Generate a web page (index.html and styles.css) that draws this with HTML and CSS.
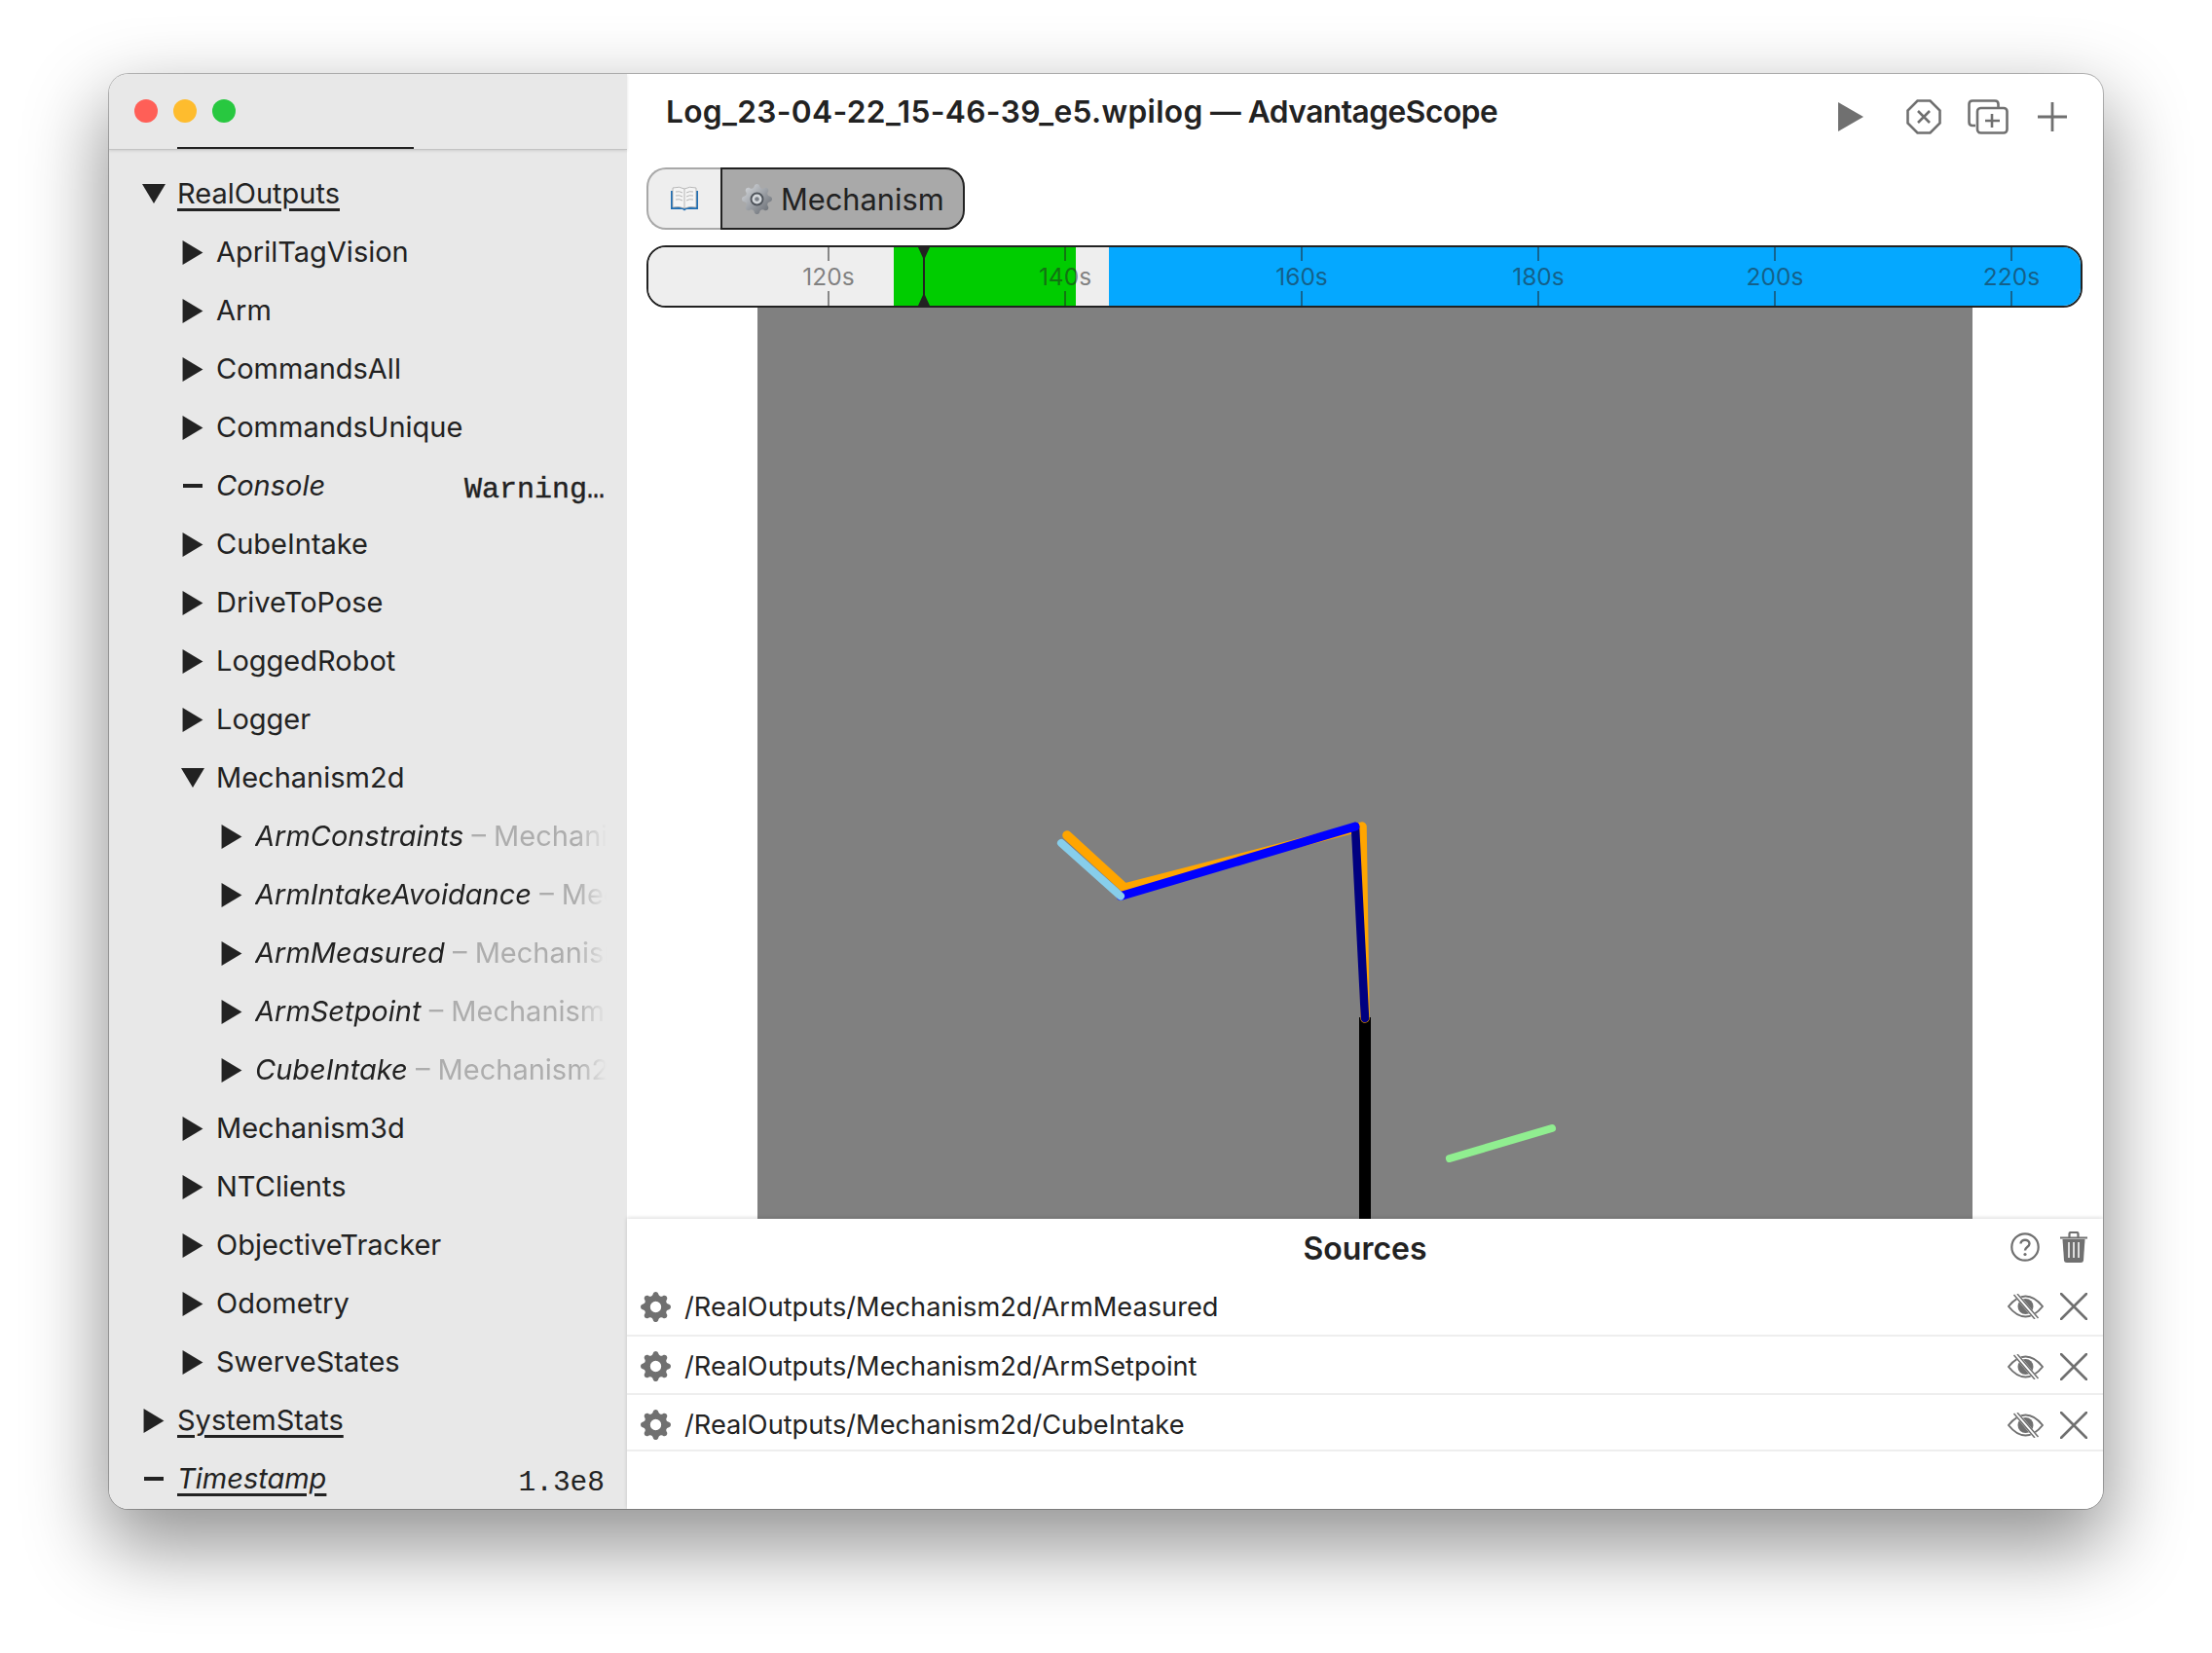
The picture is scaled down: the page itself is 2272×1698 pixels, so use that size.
FILE: index.html
```html
<!DOCTYPE html>
<html lang="en">
<head>
    <meta charset="UTF-8">
    <title>Log_23-04-22_15-46-39_e5.wpilog — AdvantageScope</title>
    <link rel="stylesheet" href="styles.css">
</head>
<body>
    <svg class="sprite" width="0" height="0">
        <symbol id="arrowRight" viewBox="0 0 20 24"><path d="M0 0L20 12L0 24Z"/></symbol>
        <symbol id="arrowDown" viewBox="0 0 24 20"><path d="M0 0H24L12 20Z"/></symbol>
        <symbol id="gear" viewBox="0 0 16 16"><path fill-rule="evenodd" d="M9.405 1.05c-.413-1.4-2.397-1.4-2.81 0l-.1.34a1.464 1.464 0 0 1-2.105.872l-.31-.17c-1.283-.698-2.686.705-1.987 1.987l.169.311c.446.82.023 1.841-.872 2.105l-.34.1c-1.4.413-1.4 2.397 0 2.81l.34.1a1.464 1.464 0 0 1 .872 2.105l-.17.31c-.698 1.283.705 2.686 1.987 1.987l.311-.169a1.464 1.464 0 0 1 2.105.872l.1.34c.413 1.4 2.397 1.4 2.81 0l.1-.34a1.464 1.464 0 0 1 2.105-.872l.31.17c1.283.698 2.686-.705 1.987-1.987l-.169-.311a1.464 1.464 0 0 1 .872-2.105l.34-.1c1.4-.413 1.4-2.397 0-2.81l-.34-.1a1.464 1.464 0 0 1-.872-2.105l.17-.31c.698-1.283-.705-2.686-1.987-1.987l-.311.169a1.464 1.464 0 0 1-2.105-.872l-.1-.34zM8 10.93a2.929 2.929 0 1 1 0-5.86 2.929 2.929 0 0 1 0 5.858z"/></symbol>
        <symbol id="eyeOff" viewBox="0 0 37 26">
            <path d="M1 13C7 5.500 13 2.500 18.500 2.500S30 5.500 36 13C30 20.500 24 23.500 18.500 23.500S7 20.500 1 13Z" fill="none" stroke="#707070" stroke-width="2"/>
            <circle cx="18.500" cy="13" r="8" fill="#707070"/>
            <path d="M8 0L30 26" stroke="#fff" stroke-width="5"/>
            <path d="M6.500 1L28 26M10 0L31.500 25" stroke="#707070" stroke-width="1.500"/>
        </symbol>
        <symbol id="close" viewBox="0 0 28 28"><path d="M1 1L27 27M27 1L1 27" fill="none" stroke="#707070" stroke-width="2.600" stroke-linecap="round"/></symbol>
    </svg>

    <div class="window">
        <aside class="sidebar">
            <div class="titlebar">
                <div class="lights">
                    <span class="light light-red"></span>
                    <span class="light light-yellow"></span>
                    <span class="light light-green"></span>
                </div>
                <div class="scroll-line"></div>
            </div>
            <div class="fields">
                <div class="row"><svg class="arrow arrow-down"><use href="#arrowDown"/></svg><span class="key table">RealOutputs</span></div>
                <div class="row lvl1"><svg class="arrow"><use href="#arrowRight"/></svg><span class="key">AprilTagVision</span></div>
                <div class="row lvl1"><svg class="arrow"><use href="#arrowRight"/></svg><span class="key">Arm</span></div>
                <div class="row lvl1"><svg class="arrow"><use href="#arrowRight"/></svg><span class="key">CommandsAll</span></div>
                <div class="row lvl1"><svg class="arrow"><use href="#arrowRight"/></svg><span class="key">CommandsUnique</span></div>
                <div class="row lvl1"><span class="dash"></span><span class="key leaf">Console</span><span class="value value-text">Warning…</span></div>
                <div class="row lvl1"><svg class="arrow"><use href="#arrowRight"/></svg><span class="key">CubeIntake</span></div>
                <div class="row lvl1"><svg class="arrow"><use href="#arrowRight"/></svg><span class="key">DriveToPose</span></div>
                <div class="row lvl1"><svg class="arrow"><use href="#arrowRight"/></svg><span class="key">LoggedRobot</span></div>
                <div class="row lvl1"><svg class="arrow"><use href="#arrowRight"/></svg><span class="key">Logger</span></div>
                <div class="row lvl1"><svg class="arrow arrow-down"><use href="#arrowDown"/></svg><span class="key">Mechanism2d</span></div>
                <div class="row lvl2"><svg class="arrow"><use href="#arrowRight"/></svg><span class="faded"><span class="leaf">ArmConstraints</span> <span class="type">– Mechanism2d</span></span></div>
                <div class="row lvl2"><svg class="arrow"><use href="#arrowRight"/></svg><span class="faded"><span class="leaf">ArmIntakeAvoidance</span> <span class="type">– Mechanism2d</span></span></div>
                <div class="row lvl2"><svg class="arrow"><use href="#arrowRight"/></svg><span class="faded"><span class="leaf">ArmMeasured</span> <span class="type">– Mechanism2d</span></span></div>
                <div class="row lvl2"><svg class="arrow"><use href="#arrowRight"/></svg><span class="faded"><span class="leaf">ArmSetpoint</span> <span class="type">– Mechanism2d</span></span></div>
                <div class="row lvl2"><svg class="arrow"><use href="#arrowRight"/></svg><span class="faded"><span class="leaf">CubeIntake</span> <span class="type">– Mechanism2d</span></span></div>
                <div class="row lvl1"><svg class="arrow"><use href="#arrowRight"/></svg><span class="key">Mechanism3d</span></div>
                <div class="row lvl1"><svg class="arrow"><use href="#arrowRight"/></svg><span class="key">NTClients</span></div>
                <div class="row lvl1"><svg class="arrow"><use href="#arrowRight"/></svg><span class="key">ObjectiveTracker</span></div>
                <div class="row lvl1"><svg class="arrow"><use href="#arrowRight"/></svg><span class="key">Odometry</span></div>
                <div class="row lvl1"><svg class="arrow"><use href="#arrowRight"/></svg><span class="key">SwerveStates</span></div>
                <div class="row"><svg class="arrow"><use href="#arrowRight"/></svg><span class="key table">SystemStats</span></div>
                <div class="row"><span class="dash"></span><span class="key leaf table">Timestamp</span><span class="value">1.3e8</span></div>
            </div>
        </aside>

        <main class="main">
            <header class="header">
                <div class="title"><span class="title-file">Log_23-04-22_15-46-39_e5.wpilog</span><span class="title-app"> — AdvantageScope</span></div>
                <div class="header-icons">
                    <svg class="icon-play" viewBox="0 0 26 30"><path d="M0 0L26 15L0 30Z"/></svg>
                    <svg class="icon-stop" viewBox="0 0 36 36"><path d="M11.500 1.500H24.500L34.500 11.500V24.500L24.500 34.500H11.500L1.500 24.500V11.500Z M12 12L24 24M24 12L12 24" fill="none" stroke="#707070" stroke-width="2.600"/></svg>
                    <svg class="icon-clone" viewBox="0 0 42 36"><path d="M8 27H5Q1.500 27 1.500 23.500V5Q1.500 1.500 5 1.500H28Q31.500 1.500 31.500 5V8" fill="none" stroke="#707070" stroke-width="2.600"/><rect x="10" y="9" width="30.500" height="25.500" rx="3.500" fill="none" stroke="#707070" stroke-width="2.600"/><path d="M25 15V29M18 22H33" stroke="#707070" stroke-width="2.600"/></svg>
                    <svg class="icon-plus" viewBox="0 0 30 30"><path d="M15 0V30M0 15H30" stroke="#707070" stroke-width="2.800"/></svg>
                </div>
            </header>

            <div class="tabs">
                <div class="tab tab-book">
                    <svg class="emoji-book" viewBox="0 0 30 26">
                        <path d="M1 5H29V24H17L15 25.500L13 24H1Z" fill="#1f6fb5"/>
                        <path d="M3 2Q10 0 15 3Q20 0 27 2V22Q20 20.500 15 23Q10 20.500 3 22Z" fill="#f4f4f4" stroke="#a9a9a9" stroke-width=".8"/>
                        <path d="M15 3V23M6 6Q10 5 13 7M6 10Q10 9 13 11M6 14Q10 13 13 15M24 6Q20 5 17 7M24 10Q20 9 17 11M24 14Q20 13 17 15" fill="none" stroke="#b5b5b5" stroke-width="1"/>
                    </svg>
                </div>
                <div class="tab tab-active">
                    <svg class="emoji-gear" viewBox="0 0 16 16">
                        <defs>
                            <linearGradient id="metal" x1="0" y1="0" x2="1" y2="1">
                                <stop offset="0" stop-color="#dcdfe3"/>
                                <stop offset="1" stop-color="#5f646b"/>
                            </linearGradient>
                        </defs>
                        <use href="#gear" width="16" height="16" fill="url(#metal)"/>
                        <circle cx="8" cy="8" r="3.100" fill="#d4d8dc" stroke="#50555c" stroke-width="1"/>
                        <circle cx="8" cy="8" r="1.200" fill="#7b8088"/>
                    </svg>
                    <span>Mechanism</span>
                </div>
            </div>

            <div class="timeline">
                <div class="seg seg-blank" style="width:252px"></div>
                <div class="seg seg-green" style="width:187px"></div>
                <div class="seg seg-blank" style="width:34px"></div>
                <div class="seg seg-blue"></div>
                <div class="tick" style="left:184px"><span>120s</span></div>
                <div class="tick" style="left:427px"><span>140s</span></div>
                <div class="tick" style="left:670px"><span>160s</span></div>
                <div class="tick" style="left:913px"><span>180s</span></div>
                <div class="tick" style="left:1156px"><span>200s</span></div>
                <div class="tick" style="left:1399px"><span>220s</span></div>
                <svg class="cursor" viewBox="0 0 12 60"><path d="M0 0H12L7 11V49L12 60H0L5 49V11Z"/></svg>
            </div>

            <div class="viewer">
                <svg class="mechanism" viewBox="0 0 1248 936">
                    <g fill="none" stroke-linecap="round" stroke-linejoin="round">
                        <path d="M624 729V936" stroke="#000" stroke-width="12" stroke-linecap="butt"/>
                        <path d="M318 542L377 596L621 533L624 730" stroke="#ffa500" stroke-width="9.500"/>
                        <path d="M614 533L624 730" stroke="#000080" stroke-width="8.500"/>
                        <path d="M373 604.500L614 533" stroke="#0000ff" stroke-width="9"/>
                        <path d="M312 550L373 604.500" stroke="#87ceeb" stroke-width="8"/>
                        <path d="M711 874L816 843" stroke="#90ee90" stroke-width="8"/>
                    </g>
                </svg>
            </div>

            <section class="sources">
                <div class="sources-title">
                    <span></span>
                    <span class="sources-name">Sources</span>
                    <div class="sources-actions">
                        <svg class="icon-help" viewBox="0 0 30 30"><circle cx="15" cy="15" r="13.700" fill="none" stroke="#707070" stroke-width="2.200"/><path d="M10.500 11.500C10.500 6.500 19.500 6.500 19.500 11.500C19.500 15 15 15 15 18.500" fill="none" stroke="#707070" stroke-width="2.400"/><circle cx="15" cy="22.500" r="1.600" fill="#707070"/></svg>
                        <svg class="icon-trash" viewBox="0 0 28 32"><path d="M0 6.500H28M9.500 6V2.500Q9.500 1 11 1H17Q18.500 1 18.500 2.500V6" fill="none" stroke="#707070" stroke-width="2.200"/><path d="M2.500 8H25.500L24 29.500Q23.800 32 21 32H7Q4.200 32 4 29.500Z" fill="#707070"/><path d="M9 11V27M14 11V27M19 11V27" stroke="#fff" stroke-width="1.500"/></svg>
                    </div>
                </div>
                <div class="source">
                    <svg class="source-type"><use href="#gear"/></svg>
                    <span class="source-key">/RealOutputs/Mechanism2d/ArmMeasured</span>
                    <svg class="icon-eye"><use href="#eyeOff"/></svg>
                    <svg class="icon-close"><use href="#close"/></svg>
                </div>
                <div class="source">
                    <svg class="source-type"><use href="#gear"/></svg>
                    <span class="source-key">/RealOutputs/Mechanism2d/ArmSetpoint</span>
                    <svg class="icon-eye"><use href="#eyeOff"/></svg>
                    <svg class="icon-close"><use href="#close"/></svg>
                </div>
                <div class="source source-last">
                    <svg class="source-type"><use href="#gear"/></svg>
                    <span class="source-key">/RealOutputs/Mechanism2d/CubeIntake</span>
                    <svg class="icon-eye"><use href="#eyeOff"/></svg>
                    <svg class="icon-close"><use href="#close"/></svg>
                </div>
            </section>
        </main>
    </div>
</body>
</html>
```

FILE: styles.css
```css
html, body {
    margin: 0;
    padding: 0;
    height: 100%;
    overflow: hidden;
    background-color: #fff;
}

body {
    font-family: Inter, "Noto Sans", sans-serif;
    font-size: 29px;
    color: #222;
    padding: 76px 0 0 112px;
    box-sizing: border-box;
}

.sprite {
    position: absolute;
}

.window {
    display: flex;
    width: 2048px;
    height: 1474px;
    border-radius: 20px;
    overflow: hidden;
    background-color: #fff;
    box-shadow: 0 0 0 1px rgba(0, 0, 0, 0.25), 0 34px 80px 6px rgba(0, 0, 0, 0.42);
}

/* sidebar */
.sidebar {
    width: 532px;
    flex-shrink: 0;
    background-color: #e8e8e8;
}

.titlebar {
    height: 78px;
    display: flex;
    flex-direction: column;
    justify-content: space-between;
    border-bottom: 1px solid #c4c4c4;
    box-shadow: 0 1px 3px rgba(0, 0, 0, 0.12);
    box-sizing: border-box;
}

.lights {
    display: flex;
    gap: 16px;
    padding: 26px 0 0 26px;
}

.light {
    width: 24px;
    height: 24px;
    border-radius: 50%;
}

.light-red {
    background-color: #ff5f57;
}

.light-yellow {
    background-color: #febc2e;
}

.light-green {
    background-color: #28c840;
}

.scroll-line {
    width: 243px;
    height: 2px;
    margin-left: 70px;
    background-color: #222;
}

.fields {
    padding-top: 14px;
}

.row {
    display: flex;
    align-items: center;
    height: 60px;
    padding: 0 21px 0 34px;
    box-sizing: border-box;
}

.lvl1 {
    padding-left: 74px;
}

.lvl2 {
    padding-left: 114px;
}

.arrow {
    width: 24px;
    height: 25px;
    flex-shrink: 0;
    margin: 2px 12px 0 0;
    fill: #222;
}

.arrow-down {
    height: 20px;
}

.dash {
    width: 20px;
    height: 4px;
    margin: 2px 14px 0 2px;
    flex-shrink: 0;
    background-color: #222;
}

.key {
    white-space: nowrap;
}

.leaf {
    font-style: italic;
}

.table {
    text-decoration: underline;
    text-decoration-thickness: 3px;
    text-underline-offset: 5px;
}

.value {
    margin: 9px 2px 0 auto;
    font-family: "Liberation Mono", monospace;
    font-size: 29.5px;
    white-space: nowrap;
}

.value-text {
    font-size: 30px;
    -webkit-text-stroke: 0.4px #222;
}

.faded {
    flex: 1;
    min-width: 0;
    overflow: hidden;
    white-space: nowrap;
    -webkit-mask-image: linear-gradient(to right, #000 calc(100% - 30px), transparent);
    mask-image: linear-gradient(to right, #000 calc(100% - 30px), transparent);
}

.type {
    color: #adadad;
}

/* main column */
.main {
    flex: 1;
    min-width: 0;
    display: flex;
    flex-direction: column;
}

.header {
    height: 96px;
    display: flex;
    justify-content: space-between;
    padding: 0 37px 0 40px;
    box-sizing: border-box;
    flex-shrink: 0;
}

.title {
    font-size: 31.7px;
    font-weight: 600;
    line-height: 38px;
    margin-top: 20px;
    white-space: nowrap;
}

.title-file {
    letter-spacing: 0.33px;
}

.title-app {
    letter-spacing: -0.5px;
}

.header-icons {
    display: flex;
    align-items: center;
    height: 36px;
    margin-top: 26px;
}

.icon-play {
    width: 26px;
    height: 30px;
    fill: #707070;
    margin-right: 44px;
}

.icon-stop {
    width: 36px;
    height: 36px;
    margin-right: 27px;
}

.icon-clone {
    width: 42px;
    height: 36px;
    margin-right: 30px;
}

.icon-plus {
    width: 30px;
    height: 30px;
}

.tabs {
    display: flex;
    height: 64px;
    margin: 0 0 16px 20px;
    flex-shrink: 0;
}

.tab {
    display: flex;
    align-items: center;
    box-sizing: border-box;
    border: 2px solid #a8a8a8;
    background-color: #eee;
}

.tab-book {
    width: 76px;
    justify-content: center;
    border-right: none;
    border-radius: 20px 0 0 20px;
}

.emoji-book {
    width: 30px;
    height: 26px;
}

.tab-active {
    width: 251px;
    padding-left: 20px;
    border: 2px solid #222;
    border-radius: 0 20px 20px 0;
    background-color: #a9a9a9;
    font-size: 30.8px;
}

.emoji-gear {
    width: 31px;
    height: 31px;
    margin-right: 9px;
}

.timeline {
    position: relative;
    display: flex;
    height: 64px;
    margin: 0 21px 0 20px;
    box-sizing: border-box;
    border: 2px solid #222;
    border-radius: 20px;
    overflow: hidden;
    flex-shrink: 0;
}

.seg-blank {
    background-color: #eee;
}

.seg-green {
    background-color: #00cc00;
}

.seg-blue {
    flex: 1;
    background-color: #05a8ff;
}

.tick {
    position: absolute;
    top: 0;
    bottom: 0;
    width: 2px;
    background: linear-gradient(to bottom, rgba(34, 34, 34, 0.5) 14px, transparent 14px, transparent 45px, rgba(34, 34, 34, 0.5) 45px);
}

.tick span {
    position: absolute;
    top: 14px;
    left: 50%;
    transform: translateX(-50%);
    font-size: 24.5px;
    line-height: 32px;
    color: rgba(34, 34, 34, 0.55);
}

.cursor {
    position: absolute;
    left: 277px;
    top: 0;
    width: 12px;
    height: 60px;
    fill: #222;
}

.viewer {
    flex: 1;
    min-height: 0;
    display: flex;
    justify-content: center;
    overflow: hidden;
}

.mechanism {
    width: 1248px;
    height: 936px;
    flex-shrink: 0;
    background-color: #808080;
}

/* sources list */
.sources {
    height: 298px;
    flex-shrink: 0;
    box-shadow: 0 -1px 4px rgba(0, 0, 0, 0.15);
    background-color: #fff;
    z-index: 1;
}

.sources-title {
    display: grid;
    grid-template-columns: 1fr auto 1fr;
    align-items: center;
    height: 61px;
    padding: 0 16px;
}

.sources-name {
    font-weight: 600;
    font-size: 32px;
}

.sources-actions {
    display: flex;
    justify-content: flex-end;
    align-items: center;
    gap: 21px;
    padding-bottom: 3px;
}

.icon-help {
    width: 30px;
    height: 30px;
}

.icon-trash {
    width: 28px;
    height: 32px;
}

.source {
    display: flex;
    align-items: center;
    height: 60px;
    padding: 0 16px 0 14px;
    box-sizing: border-box;
    border-bottom: 2px solid #eee;
}

.source + .source {
    padding-top: 3px;
}

.source + .source.source-last {
    height: 58px;
    padding-top: 5px;
}

.source-type {
    width: 31px;
    height: 31px;
    fill: #707070;
    margin-right: 14px;
    flex-shrink: 0;
}

.source-key {
    flex: 1;
    font-size: 27.2px;
    white-space: nowrap;
}

.icon-eye {
    width: 37px;
    height: 26px;
    margin-right: 17px;
}

.icon-close {
    width: 28px;
    height: 28px;
}
```
